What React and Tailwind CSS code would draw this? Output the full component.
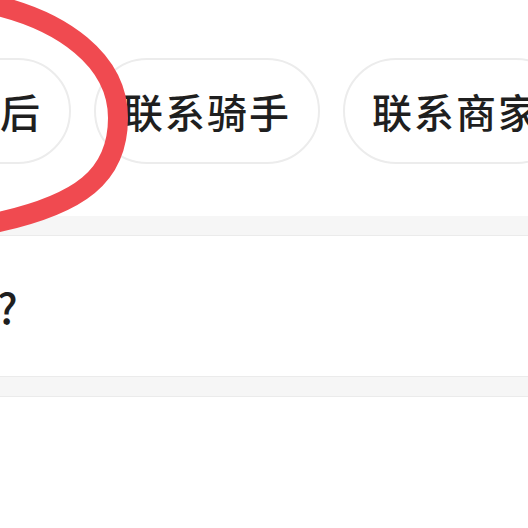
import React from "react";

const pills = ["申请售后", "联系骑手", "联系商家"];

const Pill = ({ label }) => (
  <div className="shrink-0 h-[106px] px-[27px] flex items-center rounded-full border-2 border-[#ececec] bg-white">
    <span className="text-[40px] tracking-[2px] leading-none font-medium text-[#1f1f1f] whitespace-nowrap">
      {label}
    </span>
  </div>
);

export default function App() {
  return (
    <div
      className="relative w-[528px] h-[528px] overflow-hidden bg-white"
      style={{ fontFamily: '"Noto Sans CJK SC", "Noto Sans", sans-serif' }}
    >
      {/* Aktionen */}
      <div className="pt-[58px] h-[216px]">
        <div className="flex gap-[23px] ml-[-155px]">
          {pills.map((p) => (
            <Pill key={p} label={p} />
          ))}
        </div>
      </div>

      {/* Trenner */}
      <div className="h-[20px] bg-[#f6f6f6] border-b border-[#ebebeb]" />

      {/* Frage */}
      <div className="h-[140px] flex items-center">
        <span className="ml-[-3px] text-[42px] leading-none font-medium text-[#1f1f1f]">?</span>
      </div>

      <div className="h-[21px] bg-[#f6f6f6] border-y border-[#ebebeb]" />

      {/* Markierung */}
      <svg
        className="absolute left-0 top-0 pointer-events-none"
        width="528"
        height="528"
        viewBox="0 0 528 528"
      >
        <path
          d="M -10 4 C 62 20, 118 60, 118 118 C 118 175, 82 205, -10 224"
          fill="none"
          stroke="#f04a50"
          strokeWidth="20"
          strokeLinecap="round"
        />
      </svg>
    </div>
  );
}
